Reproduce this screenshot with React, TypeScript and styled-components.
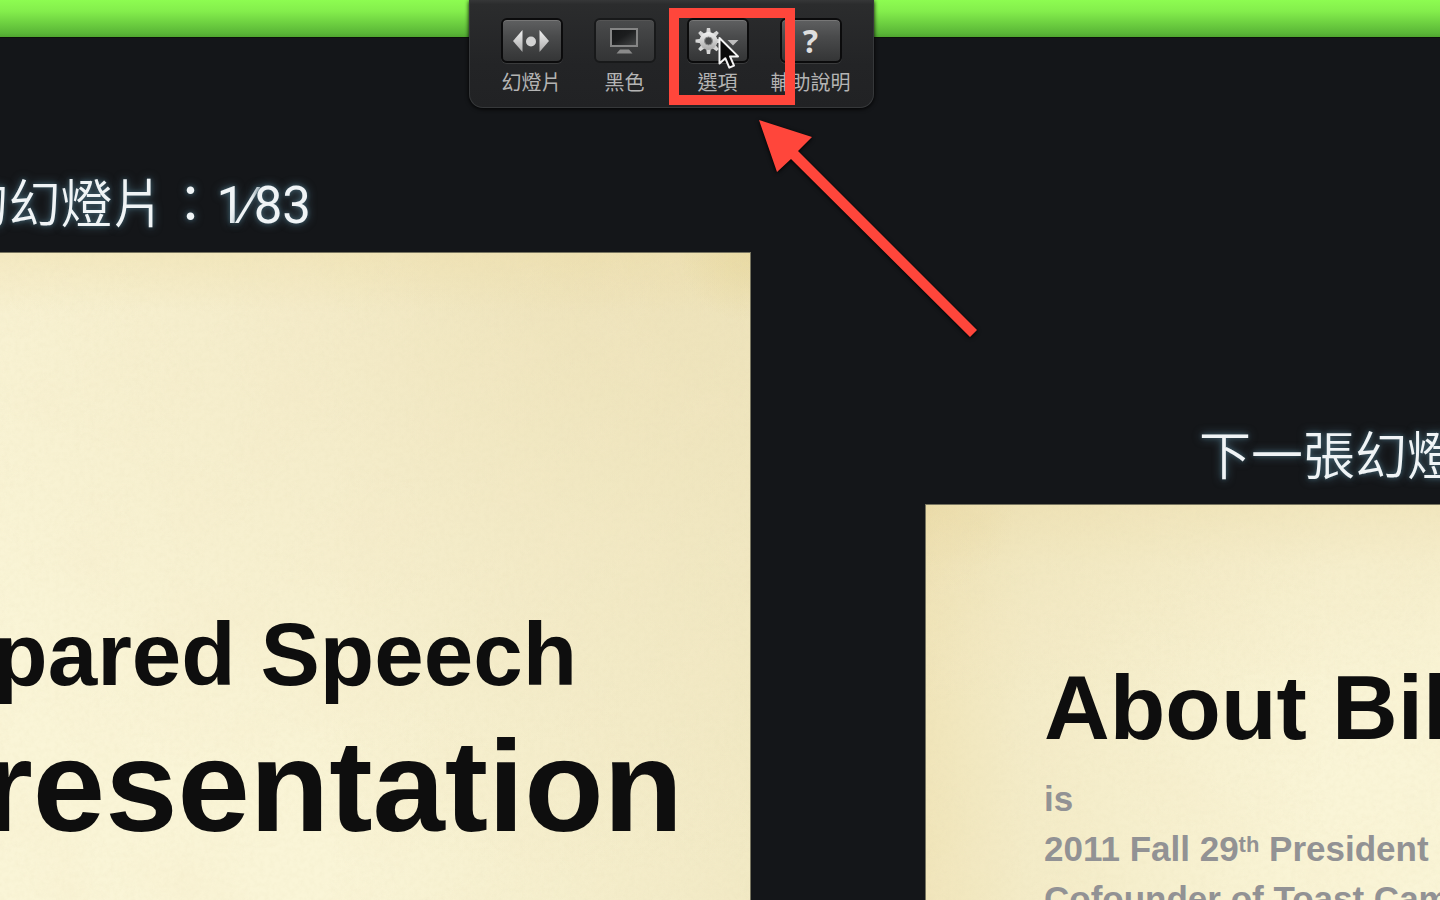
import React from "react";
import styled, { createGlobalStyle } from "styled-components";

const GlobalStyle = createGlobalStyle`
  *, *::before, *::after { box-sizing: border-box; }
  body {
    margin: 0;
    background: #141619;
    font-family: "Liberation Sans", "Noto Sans CJK TC", sans-serif;
  }
`;

const Page = styled.div`
  position: relative;
  display: flex;
  flex-direction: column;
  height: 100vh;
  overflow: hidden;
`;

const StatusBar = styled.div`
  flex: none;
  height: 38px;
  background: linear-gradient(#8dfc51, #84ee4c 30%, #5ab637 90%, #4fa52f);
  border-bottom: 1px solid #0c120a;
`;

const Toolbar = styled.nav`
  position: absolute;
  z-index: 2;
  top: 0;
  left: calc(50% - 251px);
  display: grid;
  grid-template-columns: repeat(4, 93px);
  height: 108px;
  padding: 18px 16px 0 15px;
  border: 1px solid #36383a;
  border-top: 0;
  border-radius: 0 0 14px 14px;
  background: linear-gradient(#363738, #2b2c2d 4%, #232426 60%, #212224);
  box-shadow: 0 1px 4px #000;
`;

const Tool = styled.div`
  display: flex;
  flex-direction: column;
  align-items: center;
  gap: 6px;
`;

const ToolButton = styled.button`
  display: flex;
  align-items: center;
  justify-content: center;
  width: 62px;
  height: 45px;
  padding: 0;
  border: 2px solid #0b0b0c;
  border-radius: 6px;
  background: linear-gradient(#5f6061, #4a4b4c 40%, #343536);
  box-shadow: inset 0 1px 0 #777, 0 1px 0 #3a3b3c;
  color: #dedede;
  font: bold 32px/41px "Noto Sans", sans-serif;

  &:disabled {
    border-color: #18191a;
    background: linear-gradient(#4a4b4c, #3e3f40 50%, #333435);
    box-shadow: inset 0 1px 0 #555;
  }
`;

const ToolLabel = styled.label`
  color: #b4b4b4;
  font-size: 20px;
  line-height: 28px;
  white-space: nowrap;
`;

const Highlight = styled.div`
  position: absolute;
  top: 8px;
  left: 199px;
  width: 126px;
  height: 97px;
  border: 10px solid #ff463b;
`;

const Arrow = styled.svg`
  position: absolute;
  top: 112px;
  left: 280px;
  filter: drop-shadow(0 1px 2px #000);
`;

const Cursor = styled.svg`
  position: absolute;
  top: 34px;
  left: 245px;
`;

const Stage = styled.main`
  flex: 1;
  min-height: 0;
  display: grid;
  grid-template-columns: minmax(0, 751fr) minmax(0, 515fr);
  column-gap: 174px;
`;

const Column = styled.section<{ $top: number }>`
  display: flex;
  flex-direction: column;
  min-width: 0;
  padding-top: ${(p) => p.$top}px;
`;

const Caption = styled.h2<{ $align: "start" | "end" }>`
  display: flex;
  justify-content: flex-${(p) => p.$align};
  margin: 0;
  padding: ${(p) => (p.$align === "end" ? "0 440px 0 0" : "0 0 0 274px")};
  height: 76px;
  color: #f0f4f6;
  font-family: Roboto, "Noto Sans CJK TC", sans-serif;
  font-size: 52px;
  line-height: 60px;
  font-weight: 350;
  white-space: nowrap;
  text-shadow: 0 0 10px #4a6a7a, 0 0 4px #34505c;
`;

const Counter = styled.span`
  font-size: 51px;
  font-weight: 400;
`;

const Slash = styled.span`
  font-family: "Liberation Sans", sans-serif;
`;

const Slide = styled.article<{ $side: "left" | "right" }>`
  position: relative;
  flex: 1;
  min-height: 0;
  overflow: hidden;
  border: 1px solid #77745f;
  border-width: ${(p) => (p.$side === "left" ? "1px 1px 0 0" : "1px 0 0 1px")};
  white-space: nowrap;
  color: #0e0e0e;
  font-weight: bold;
  background: ${(p) =>
    p.$side === "left"
      ? `radial-gradient(circle at 100% 0, rgba(226, 208, 140, 0.4), transparent 70px),
         linear-gradient(rgba(236, 218, 160, 0.35), transparent 60px),
         radial-gradient(ellipse 760px 620px at 80% 0, rgba(234, 220, 176, 0.65), rgba(238, 226, 186, 0.4) 50%, transparent),
         linear-gradient(to left, rgba(236, 226, 184, 0.6), transparent 420px),
         #faf5d7`
      : `radial-gradient(circle at 0 0, rgba(226, 206, 140, 0.3), transparent 90px),
         linear-gradient(rgba(234, 218, 168, 0.55), rgba(236, 222, 176, 0.3) 60px, transparent 200px),
         linear-gradient(to right, rgba(234, 218, 166, 0.6), rgba(236, 224, 180, 0.45) 100px, transparent 400px),
         #faf5d7`};
`;

const Grain = styled.svg`
  position: absolute;
  inset: 0;
  width: 100%;
  height: 100%;
`;

const SlideBody = styled.div<{ $side: "left" | "right" }>`
  position: relative;
  display: flex;
  flex-direction: column;
  align-items: ${(p) => (p.$side === "left" ? "flex-end" : "flex-start")};
  padding: ${(p) => (p.$side === "left" ? "351px 67px 0 0" : "151px 0 0 118px")};
`;

const Kicker = styled.p`
  margin: 0 106px 0 0;
  font-size: 89px;
  line-height: 100px;
`;

const Title = styled.h1`
  margin: 0;
  font-size: 130px;
  line-height: 164px;
`;

const NextTitle = styled.h3`
  margin: 0 0 14px;
  font-size: 91px;
  line-height: 104px;
`;

const Line = styled.p`
  margin: 0;
  color: #929294;
  font-size: 35px;
  line-height: 50px;
`;

const Ordinal = styled.sup`
  font-size: 22px;
  line-height: 0;
  vertical-align: 9px;
`;

const IconFill = () => (
  <defs>
    <linearGradient id="silver" x1="0" y1="0" x2="0" y2="1">
      <stop offset="0" stopColor="#f2f2f2" />
      <stop offset="1" stopColor="#a9a9a9" />
    </linearGradient>
    <linearGradient id="screen" x1="0" y1="0" x2="1" y2="1">
      <stop offset="0" stopColor="#151617" />
      <stop offset="0.45" stopColor="#1c1d1e" />
      <stop offset="1" stopColor="#47494a" />
    </linearGradient>
  </defs>
);

const SlidesIcon = () => (
  <svg width="58" height="42" viewBox="0 0 58 42" aria-hidden="true">
    <IconFill />
    <path d="M10 21 19.5 10V32Z" fill="url(#silver)" />
    <circle cx="28" cy="21.5" r="5" fill="#d2d2d2" />
    <path d="M46 21 36.5 10V32Z" fill="url(#silver)" />
  </svg>
);

const MonitorIcon = () => (
  <svg width="58" height="42" viewBox="0 0 58 42" aria-hidden="true">
    <rect x="15" y="9" width="26" height="17" fill="url(#screen)" stroke="#858585" strokeWidth="2" />
    <path d="M24 29.5H33L36.5 33.5H20.5Z" fill="#8a8a8a" />
  </svg>
);

const TEETH = [0, 45, 90, 135, 180, 225, 270, 315];

const GearIcon = () => (
  <svg width="58" height="42" viewBox="0 0 58 42" aria-hidden="true">
    <g fill="url(#silver)">
      {TEETH.map((a) => (
        <path key={a} d="M17.2 13.5 17.9 8H21.1L21.8 13.5Z" fill="#d6d6d6" transform={`rotate(${a} 19.5 21)`} />
      ))}
      <circle cx="19.5" cy="21" r="9" />
    </g>
    <circle cx="19.5" cy="21" r="4" fill="#4a4b4c" stroke="#8b8b8b" />
    <path d="M38.5 20H49.5L44 25.5Z" fill="#bdbdbd" />
  </svg>
);

const PaperGrain = ({ id, seed }: { id: string; seed: number }) => (
  <Grain aria-hidden="true">
    <filter id={`${id}-fine`}>
      <feTurbulence type="fractalNoise" baseFrequency="0.2" numOctaves={3} seed={seed} />
      <feColorMatrix values="0 0 0 0 0.74  0 0 0 0 0.68  0 0 0 0 0.44  0.5 0 0 0 -0.18" />
    </filter>
    <filter id={`${id}-stain`}>
      <feTurbulence type="fractalNoise" baseFrequency="0.012" numOctaves={4} seed={seed} />
      <feColorMatrix values="0 0 0 0 0.9  0 0 0 0 0.8  0 0 0 0 0.56  0.9 0 0 0 -0.38" />
    </filter>
    <rect width="100%" height="100%" filter={`url(#${id}-fine)`} opacity="0.45" />
    <rect width="100%" height="100%" filter={`url(#${id}-stain)`} opacity="0.5" />
  </Grain>
);

export default function App() {
  return (
    <>
      <GlobalStyle />
      <Page>
        <StatusBar />
        <Toolbar>
          <Tool>
            <ToolButton id="slides" type="button"><SlidesIcon /></ToolButton>
            <ToolLabel htmlFor="slides">幻燈片</ToolLabel>
          </Tool>
          <Tool>
            <ToolButton id="black" type="button" disabled><MonitorIcon /></ToolButton>
            <ToolLabel htmlFor="black">黑色</ToolLabel>
          </Tool>
          <Tool>
            <ToolButton id="options" type="button" aria-haspopup="menu"><GearIcon /></ToolButton>
            <ToolLabel htmlFor="options">選項</ToolLabel>
          </Tool>
          <Tool>
            <ToolButton id="help" type="button">?</ToolButton>
            <ToolLabel htmlFor="help">輔助說明</ToolLabel>
          </Tool>
          <Highlight />
          <Cursor width="28" height="38" viewBox="0 0 28 38" aria-hidden="true">
            <path
              d="M4.5 4V29.5L10.3 24.2L14.3 33.6L19 31.6L15 22.4H23Z"
              fill="#0a0a0a"
              stroke="#f4f4f4"
              strokeWidth="2"
              strokeLinejoin="round"
            />
          </Cursor>
          <Arrow width="240" height="240" viewBox="750 112 240 240" aria-hidden="true">
            <path d="M759 120 812 137 798 151 977 330 970 337 791 159 777 172Z" fill="#ff463b" />
          </Arrow>
        </Toolbar>
        <Stage>
          <Column $top={138}>
            <Caption $align="end">
              目前的幻燈片：
              <Counter>
                1<Slash>⁄</Slash>83
              </Counter>
            </Caption>
            <Slide $side="left">
              <PaperGrain id="current" seed={4} />
              <SlideBody $side="left">
                <Kicker>Prepared Speech</Kicker>
                <Title>Presentation</Title>
              </SlideBody>
            </Slide>
          </Column>
          <Column $top={390}>
            <Caption $align="start">下一張幻燈片</Caption>
            <Slide $side="right">
              <PaperGrain id="next" seed={11} />
              <SlideBody $side="right">
                <NextTitle>About Bill</NextTitle>
                <Line>is</Line>
                <Line>2011 Fall 29<Ordinal>th</Ordinal> President</Line>
                <Line>Cofounder of Toast Camp</Line>
              </SlideBody>
            </Slide>
          </Column>
        </Stage>
      </Page>
    </>
  );
}
